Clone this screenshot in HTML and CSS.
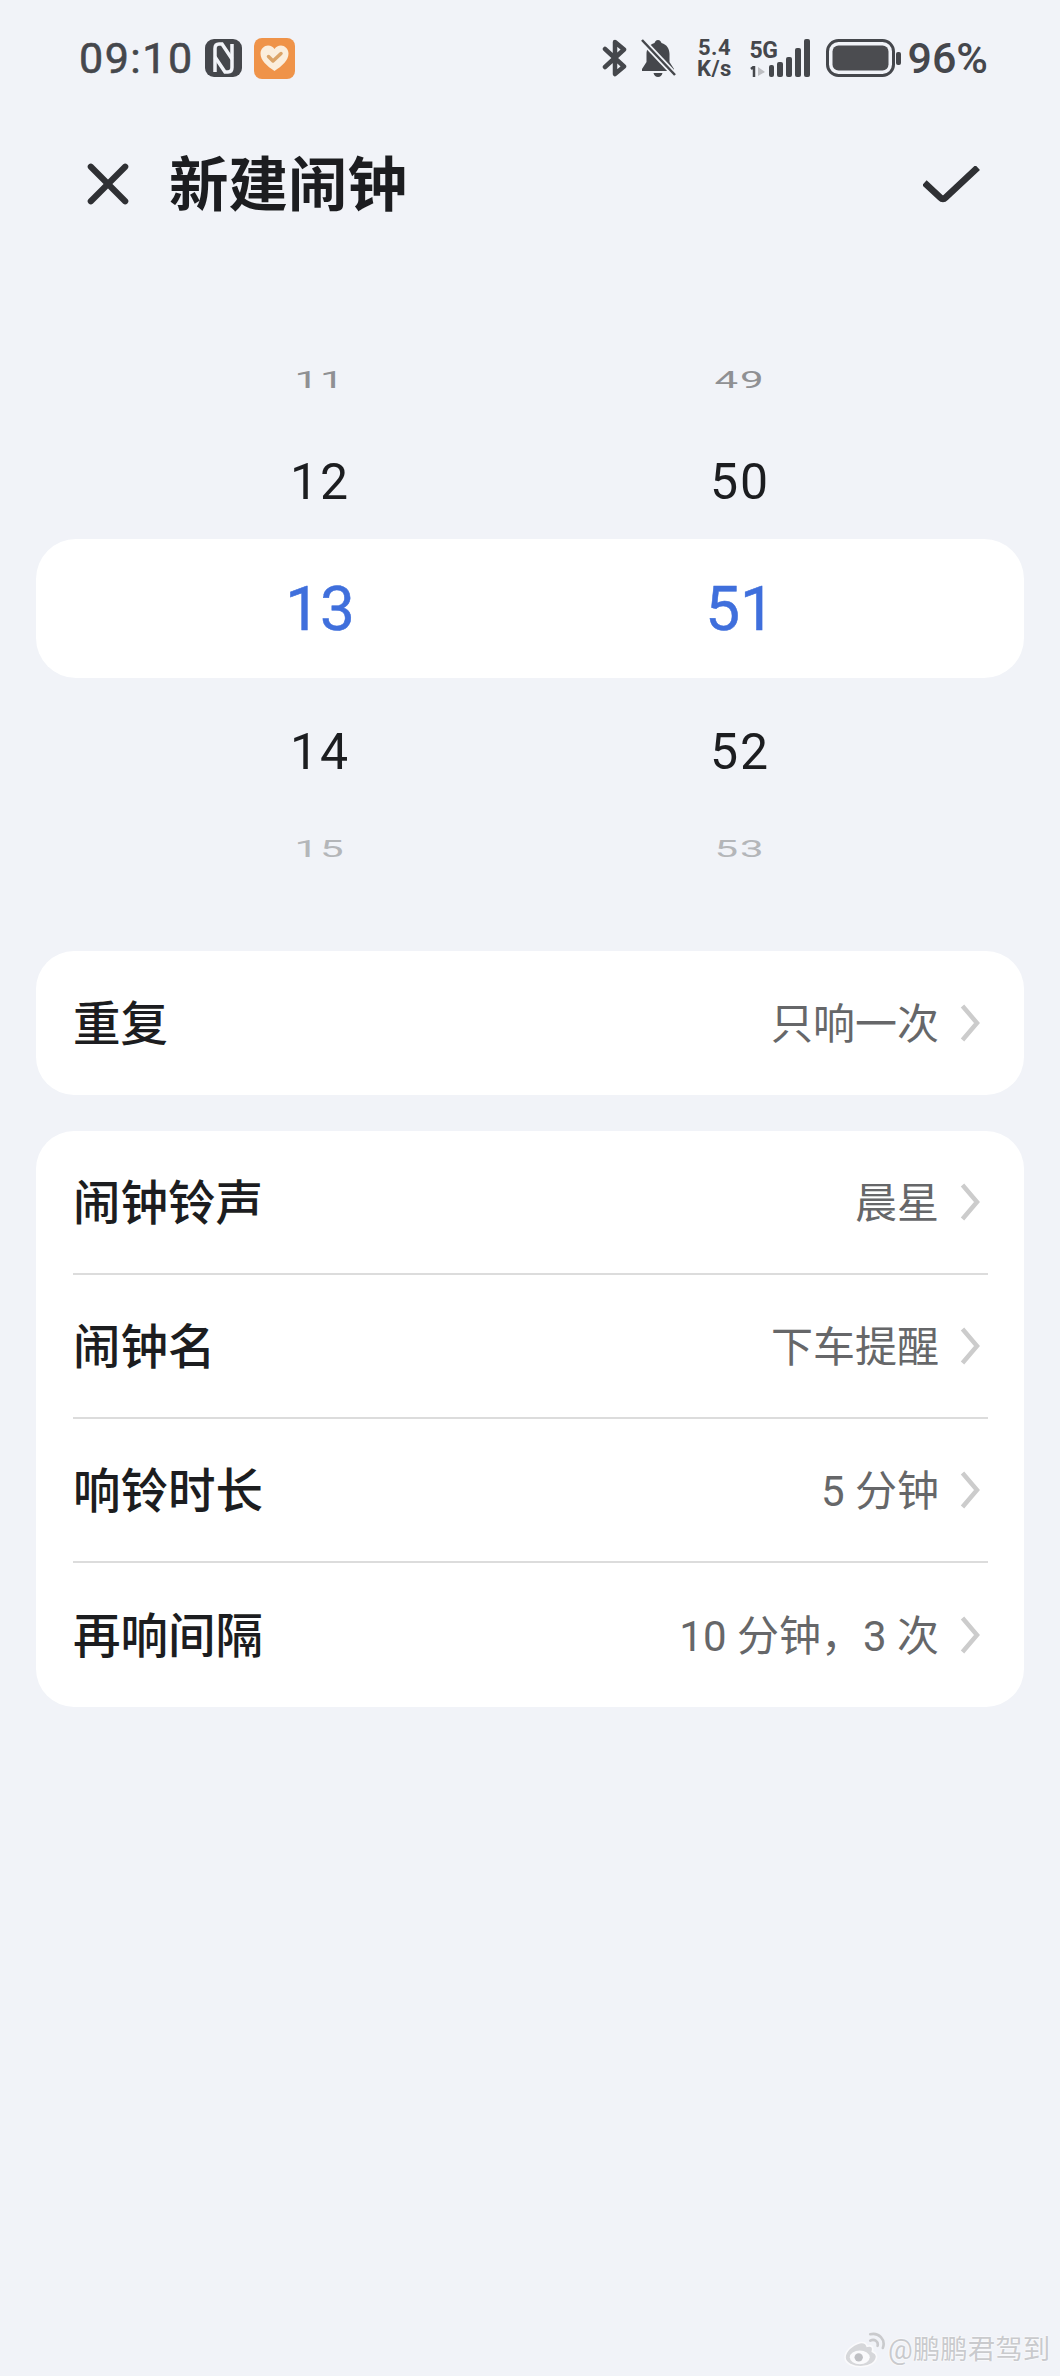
FILE: index.html
```html
<!doctype html>
<html lang="zh">
   <head>
      <meta charset="utf-8">
      <meta name="viewport" content="width=device-width, initial-scale=1">
      <title>新建闹钟</title>
      <link rel="stylesheet" href="styles.css">
   </head>
   <body>
      <div class="status">
         <div class="status-left">
            <span class="clock">09:10</span>
            <svg class="nfc" viewBox="0 0 37 38">
               <rect width="37" height="38" rx="9" fill="#45474c"/>
               <path d="M10 33V9.5Q10 5 14 5H17L27 20" fill="none" stroke="#f1f3f8" stroke-width="3.500"/>
               <path d="M27 5V28.500Q27 33 23 33H20L10 18" fill="none" stroke="#f1f3f8" stroke-width="3.500"/>
            </svg>
            <svg class="health" viewBox="0 0 41 41">
               <rect width="41" height="41" rx="8" fill="#ef9349"/>
               <path d="M20.500 33C13 28 6.500 22.500 6.500 15.500C6.500 10.500 10.500 7.500 14 7.500C17 7.500 19 9 20.500 11C22 9 24 7.500 27 7.500C30.500 7.500 34.500 10.500 34.500 15.500C34.500 22.500 28 28 20.500 33Z" fill="#fbeedd"/>
               <path d="M14.500 18.500L19 23L27 15.500" fill="none" stroke="#dba468" stroke-width="3.500" stroke-linecap="round" stroke-linejoin="round"/>
            </svg>
         </div>
         <div class="status-right">
            <svg class="bt" viewBox="0 0 26 38">
               <path d="M3 10L22 27.500L13 35V3L22 10.500L3 28" fill="none" stroke="#45474c" stroke-width="4.500" stroke-linejoin="round" stroke-linecap="round"/>
            </svg>
            <svg class="bell" viewBox="0 0 36 40">
               <path d="M18 2C20 2 21 3.500 21.500 5C27 6.500 29.500 11 29.500 16V24L34 31V33H2V31L6.500 24V16C6.500 11 9 6.500 14.500 5C15 3.500 16 2 18 2Z" fill="#45474c"/>
               <path d="M13.500 35H22.500Q21.500 39 18 39Q14.500 39 13.500 35Z" fill="#45474c"/>
               <path d="M1 1L35 37" stroke="#f1f3f8" stroke-width="6"/>
               <path d="M2 2L35 37" stroke="#45474c" stroke-width="2.500"/>
            </svg>
            <div class="speed">
               <span>5.4</span>
               <span>K/s</span>
            </div>
            <div class="network">
               <span class="net-type">5G</span>
               <svg class="net-arrows" viewBox="0 0 20 11">
                  <path d="M2 3L5 0.500V11" fill="none" stroke="#45474c" stroke-width="2.500"/>
                  <path d="M9 1L16 6L9 10Z" fill="#bdbec2"/>
               </svg>
            </div>
            <svg class="bars" viewBox="0 0 42 38">
               <rect x="0" y="26" width="5" height="12" rx="2" fill="#45474c"/>
               <rect x="8" y="23" width="6" height="15" rx="2" fill="#45474c"/>
               <rect x="17" y="18" width="6" height="20" rx="2" fill="#45474c"/>
               <rect x="26" y="9" width="6" height="29" rx="2" fill="#45474c"/>
               <rect x="35" y="0" width="6" height="38" rx="2" fill="#45474c"/>
            </svg>
            <svg class="battery" viewBox="0 0 76 38">
               <rect x="1.500" y="1.500" width="66" height="35" rx="11" fill="none" stroke="#45474c" stroke-width="3"/>
               <rect x="6.500" y="6.500" width="56" height="25" rx="6" fill="#4b4c50"/>
               <rect x="70" y="13" width="5" height="13" rx="2" fill="#45474c"/>
            </svg>
            <span class="percent">96%</span>
         </div>
      </div>

      <div class="header">
         <svg class="close" viewBox="0 0 44 44">
            <path d="M4 4L40 40M40 4L4 40" stroke="#2f3034" stroke-width="6.500" stroke-linecap="round"/>
         </svg>
         <h1 class="title">新建闹钟</h1>
         <svg class="done" viewBox="0 0 60 40">
            <path d="M4 20L18 33Q21 36 24 33L55 4" fill="none" stroke="#2f3034" stroke-width="7" stroke-linecap="square"/>
         </svg>
      </div>

      <div class="wheel">
         <div class="wheel-row far far-top"><span class="far-num dark">11</span><span class="far-num dark">49</span></div>
         <div class="wheel-row near near-top"><span>12</span><span>50</span></div>
         <div class="wheel-row selected"><span>13</span><span>51</span></div>
         <div class="wheel-row near near-bottom"><span>14</span><span>52</span></div>
         <div class="wheel-row far far-bottom"><span class="far-num">15</span><span class="far-num">53</span></div>
      </div>

      <div class="card repeat">
         <div class="row">
            <span class="label">重复</span>
            <span class="value">只响一次</span>
            <svg class="chev" viewBox="0 0 20 38"><path d="M2.500 2L17 19L2.500 36" fill="none" stroke="#cccccc" stroke-width="4.500"/></svg>
         </div>
      </div>

      <div class="card">
         <div class="row line">
            <span class="label">闹钟铃声</span>
            <span class="value">晨星</span>
            <svg class="chev" viewBox="0 0 20 38"><path d="M2.500 2L17 19L2.500 36" fill="none" stroke="#cccccc" stroke-width="4.500"/></svg>
         </div>
         <div class="row line">
            <span class="label">闹钟名</span>
            <span class="value">下车提醒</span>
            <svg class="chev" viewBox="0 0 20 38"><path d="M2.500 2L17 19L2.500 36" fill="none" stroke="#cccccc" stroke-width="4.500"/></svg>
         </div>
         <div class="row line">
            <span class="label">响铃时长</span>
            <span class="value">5 分钟</span>
            <svg class="chev" viewBox="0 0 20 38"><path d="M2.500 2L17 19L2.500 36" fill="none" stroke="#cccccc" stroke-width="4.500"/></svg>
         </div>
         <div class="row">
            <span class="label">再响间隔</span>
            <span class="value">10 分钟，3 次</span>
            <svg class="chev" viewBox="0 0 20 38"><path d="M2.500 2L17 19L2.500 36" fill="none" stroke="#cccccc" stroke-width="4.500"/></svg>
         </div>
      </div>

      <div class="mark">
         <svg class="mark-logo" viewBox="0 0 40 34">
            <path d="M15 10C7 12 1 19 1 24C1 30 9 33 16 33C24 33 31 29 31 23C31 20 28 19 27 18.500C28 15 27 12 22 13.500C21 10 18 9.500 15 10Z" fill="#d6d7da" stroke="#fafafc" stroke-width="1.500"/>
            <ellipse cx="15" cy="24" rx="9.500" ry="6.500" fill="#fafafc"/>
            <circle cx="14" cy="24" r="4" fill="#bfc0c4"/>
            <path d="M25 8C29 6 33 9 32 13M25 2C33 0 40 7 37 15" fill="none" stroke="#c9cacd" stroke-width="2.500" stroke-linecap="round"/>
         </svg>
         <span class="mark-text">@鹏鹏君驾到</span>
      </div>
   </body>
</html>
```

FILE: styles.css
```css
* { box-sizing: border-box; }
html, body { margin: 0; padding: 0; }
body {
width: 1060px;
height: 2376px;
position: relative;
overflow: hidden;
background: #f1f3f8;
color: #1c1d20;
font-family: Roboto, "Noto Sans CJK SC", sans-serif;
}

/* status bar */
.status {
height: 116px;
padding: 0 72px 0 79px;
display: flex;
justify-content: space-between;
align-items: center;
color: #45474c;
}
.status-left, .status-right { display: flex; align-items: center; }
.clock { font-size: 43px; letter-spacing: 1.500px; width: 126px; white-space: nowrap; -webkit-text-stroke: 0.6px #45474c; }
.nfc { width: 37px; height: 38px; }
.health { width: 41px; height: 41px; margin-left: 12px; }
.bt { width: 26px; height: 38px; }
.bell { width: 36px; height: 40px; margin-left: 12px; }
.speed {
width: 40px;
margin-left: 18px;
display: flex;
flex-direction: column;
align-items: center;
font-size: 22px;
line-height: 21px;
font-weight: 700;
letter-spacing: 0.5px;
}
.network { width: 20px; margin-left: 15px; display: flex; flex-direction: column; align-items: flex-start; }
.net-type { font-size: 23px; line-height: 24px; font-weight: 700; letter-spacing: -0.5px; white-space: nowrap; }
.net-arrows { width: 20px; height: 11px; margin-top: 3px; }
.bars { width: 42px; height: 38px; margin-left: 0; }
.battery { width: 76px; height: 38px; margin-left: 15px; }
.percent { font-size: 43px; font-weight: 500; margin-left: 5px; }

/* title */
.header {
height: 136px;
padding: 0 80px 0 87px;
display: flex;
align-items: center;
}
.close { width: 42px; height: 42px; }
.title { margin: 3px 0 0 40px; flex: 1; font-size: 59.500px; font-weight: 700; line-height: 70px; color: #1c1d20; }
.done { width: 57px; height: 38px; margin-top: 2px; }

/* time picker */
.wheel { margin: 79px 36px 0; }
.wheel-row {
display: grid;
grid-template-columns: 420px 420px;
padding: 0 74px;
align-items: center;
justify-items: center;
}
.far-top { height: 98px; }
.near-top { height: 106px; margin-bottom: 4px; }
.selected { height: 139px; border-radius: 40px; background: #fff; color: #3f6fdc; font-size: 62px; font-weight: 400; -webkit-text-stroke: 0.5px #3f6fdc; }
.near-bottom { height: 148px; }
.far-bottom { height: 46px; }
.near { font-size: 50px; letter-spacing: 2px; color: #1c1d20; }
.far-num {
display: block;
font-size: 42px;
line-height: 40px;
letter-spacing: 2px;
color: #b4b6b9;
transform: scaleY(0.57);
}
.far-num.dark { color: #8f9093; }

/* list cards */
.card { margin: 0 36px 36px; border-radius: 38px; background: #fff; padding: 0 36px 0 37px; }
.repeat { margin-top: 79px; }
.row { height: 144px; display: flex; align-items: center; }
.line { border-bottom: 2px solid #dcdcdc; }
.label { flex: 1; font-size: 47.500px; font-weight: 500; color: #1c1d20; margin-bottom: 5px; }
.value { font-size: 42px; color: #666769; margin-bottom: 5px; }
.chev { width: 20px; height: 38px; margin-left: 21px; margin-right: 8px; }

/* watermark */
.mark { position: absolute; left: 844px; top: 2332px; display: flex; align-items: center; }
.mark-logo { width: 42px; height: 36px; }
.mark-text {
margin-left: 2px;
font-size: 27.500px;
line-height: 36px;
color: #c9cacd;
white-space: nowrap;
text-shadow: 0 0 2px #fff, 0 0 2px #fff;
}
```
